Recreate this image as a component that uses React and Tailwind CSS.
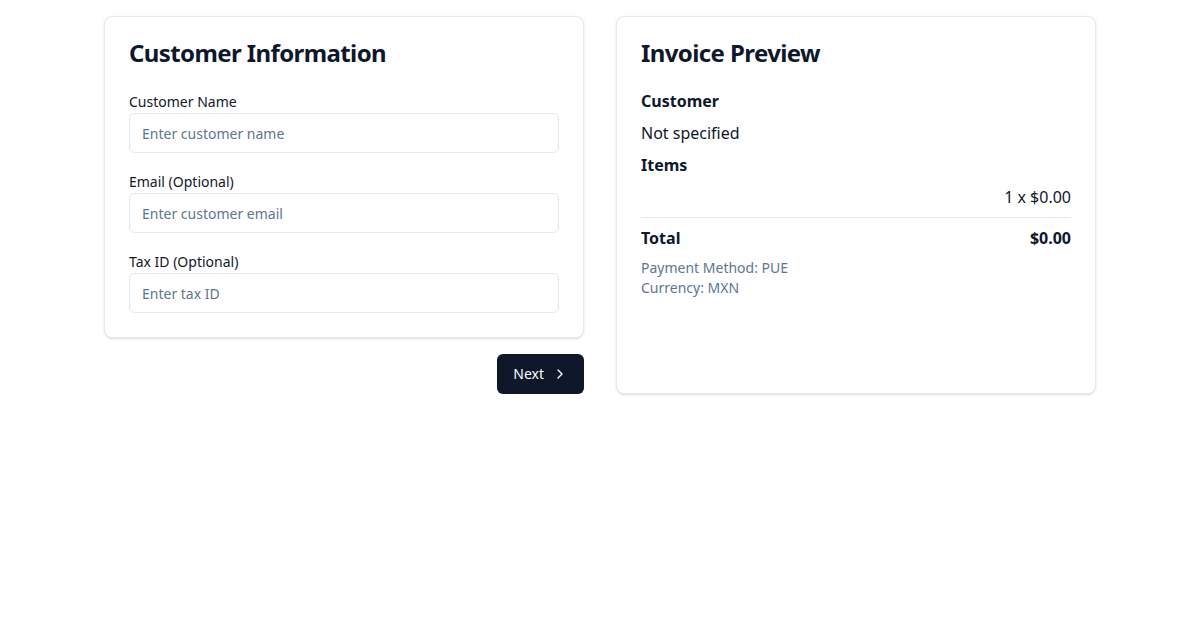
import { ChevronRight } from 'lucide-react';

const Field = ({ label, placeholder }) => (
  <div>
    <label className="block pt-px text-sm leading-[23px] text-slate-900">{label}</label>
    <input
      type="text"
      placeholder={placeholder}
      className="h-10 w-full rounded-md border border-slate-200 bg-white px-3 text-sm text-slate-900 placeholder:text-slate-500 outline-none"
    />
  </div>
);

export default function App() {
  return (
    <div className="min-h-screen bg-white text-slate-900" style={{ fontFamily: '"Noto Sans", sans-serif' }}>
      <div className="mx-auto max-w-5xl p-4">
        <div className="grid grid-cols-2 gap-8">
          {/* left column */}
          <div>
            <div className="rounded-lg border border-slate-200 bg-white shadow-sm">
              <div className="p-6">
                <h2 className="text-2xl font-bold leading-none tracking-tight">Customer Information</h2>
              </div>
              <div className="space-y-4 px-6 pb-6">
                <Field label="Customer Name" placeholder="Enter customer name" />
                <Field label="Email (Optional)" placeholder="Enter customer email" />
                <Field label="Tax ID (Optional)" placeholder="Enter tax ID" />
              </div>
            </div>
            <div className="mt-4 flex justify-end">
              <button className="flex h-10 items-center gap-2 rounded-md bg-slate-900 px-4 text-sm text-white">
                Next
                <ChevronRight className="h-4 w-4" />
              </button>
            </div>
          </div>

          {/* right column */}
          <div className="rounded-lg border border-slate-200 bg-white shadow-sm">
            <div className="p-6">
              <h2 className="text-2xl font-bold leading-none tracking-tight">Invoice Preview</h2>
            </div>
            <div className="space-y-2 px-6 pb-6 leading-6">
              <h3 className="font-bold">Customer</h3>
              <p>Not specified</p>
              <h3 className="font-bold">Items</h3>
              <div className="flex justify-end">
                <span>1 x $0.00</span>
              </div>
              <div className="border-t border-slate-200 pt-2">
                <div className="flex justify-between font-bold">
                  <span>Total</span>
                  <span>$0.00</span>
                </div>
              </div>
              <div className="text-sm leading-5 text-slate-500">
                <p>Payment Method: PUE</p>
                <p>Currency: MXN</p>
              </div>
            </div>
          </div>
        </div>
      </div>
    </div>
  );
}
